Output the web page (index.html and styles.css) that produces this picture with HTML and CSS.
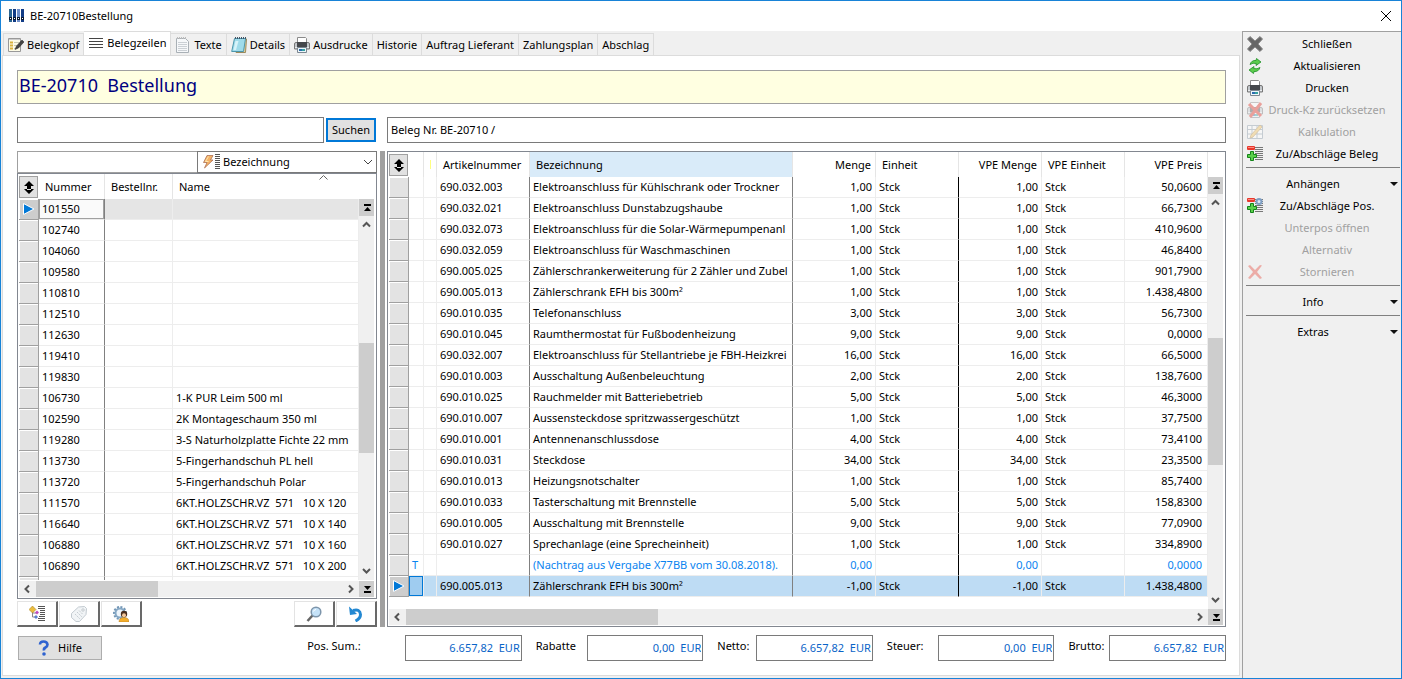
FILE: index.html
```html
<!DOCTYPE html>
<html lang="de">
<head>
    <meta charset="UTF-8">
    <meta name="viewport" content="width=device-width, initial-scale=1.0">
    <title>BE-20710 Bestellung</title>
    <link rel="stylesheet" href="styles.css">
</head>
<body>
    <!-- Shared icons -->
    <svg class="sprite" aria-hidden="true">
        <symbol id="i-printer" viewBox="0 0 16 16">
            <path d="M3.500.5h8l1 1V6h-9z" fill="#fff" stroke="#8a8a8a"/>
            <path d="M.5 7q0-1.500 1.500-1.500h12q1.500 0 1.500 1.500v5H.5z" fill="#c3c7cb" stroke="#777"/>
            <path d="M3 5h10v5H3z" fill="#45484c"/>
            <path d="M1 10.500h14" stroke="#e9ecee"/>
            <path d="M3.500 10.500h9v5h-9z" fill="#eef6fb" stroke="#7b8790"/>
            <path d="M5 12h3v2H5z" fill="#2b6cb0"/><path d="M8 12h3v2H8z" fill="#35a3a0"/>
        </symbol>
        <symbol id="i-sort" viewBox="0 0 16 16">
            <path d="M8 2l5 5H3zM8 15l5-5H3zM6 6h4v5H6z" fill="#000"/>
        </symbol>
        <symbol id="i-plusminus" viewBox="0 0 16 16">
            <path d="M8 1.500h8M8 3.500h8M8 5.500h8M8 7.500h8M10 9.500h6M10 11.500h6M8 13.500h8" stroke="#777"/>
            <rect x="0" y="0" width="8" height="4" rx="1" fill="#e8382c"/><path d="M1 1.500h6" stroke="#ff8b80"/>
            <path d="M3.500 5.500h3v3h3v3h-3v3h-3v-3h-3v-3h3z" fill="#5bd04a" stroke="#14841a"/>
        </symbol>
        <symbol id="i-up" viewBox="0 0 15 17"><path d="M4 10.500l3.500-3.500 3.500 3.500" fill="none" stroke="#555" stroke-width="2"/></symbol>
        <symbol id="i-down" viewBox="0 0 15 17"><path d="M4 6l3.500 3.500L11 6" fill="none" stroke="#555" stroke-width="2"/></symbol>
        <symbol id="i-left" viewBox="0 0 17 16"><path d="M10 4.500L6.500 8l3.500 3.500" fill="none" stroke="#555" stroke-width="2"/></symbol>
        <symbol id="i-right" viewBox="0 0 17 16"><path d="M7 4.500l3.500 3.500L7 11.500" fill="none" stroke="#555" stroke-width="2"/></symbol>
        <symbol id="i-first" viewBox="0 0 15 17"><path d="M5 5h7v2H5zM8.500 8l3.500 4H5z"/></symbol>
        <symbol id="i-last" viewBox="0 0 15 16"><path d="M5 10h7v2H5zM8.500 9L12 5H5z"/></symbol>
        <symbol id="i-row" viewBox="0 0 14 14"><path d="M2.500 1.500v11L13 7z" fill="#0078d7" stroke="#fff"/></symbol>
        <symbol id="i-menu" viewBox="0 0 8 5"><path d="M0 0h8L4 4z" fill="#111"/></symbol>
    </svg>

    <div class="window">
        <header class="titlebar">
            <svg width="16" height="16" viewBox="0 0 16 16" aria-hidden="true">
                <path d="M0 1h3v13H0z" fill="#2a6592"/><path d="M4 1h3v13H4z" fill="#123c86"/><path d="M8 1h3v13H8z" fill="#6f8fc9"/><path d="M12 1h3v13h-3z" fill="#123c86"/>
                <path d="M0 9h3v3H0zM4 9h3v3H4zM8 9h3v3H8zM12 9h3v3h-3z" fill="#0a1a33"/><path d="M1 10h1v1H1zM5 10h1v1H5zM9 10h1v1H9zM13 10h1v1h-1z" fill="#fff"/>
            </svg>
            <h1>BE-20710Bestellung</h1>
            <button class="close" type="button" aria-label="Fenster schließen">
                <svg width="12" height="12" viewBox="0 0 12 12"><path d="M1 1l10 10M11 1L1 11" stroke="#000" fill="none"/></svg>
            </button>
        </header>

        <div class="body">
            <main class="main">
                <nav class="tabs">
                    <button class="tab" type="button">
                        <svg width="16" height="16" viewBox="0 0 16 16"><path d="M.5 1.500h12v13H.5z" fill="#fdfbe6" stroke="#999"/><path d="M1 2h11v1H1z" fill="#ccc"/><path d="M2 5.500h3M2 8.500h3M2 11.500h3" stroke="#d9b23c" stroke-width="2"/><path d="M6 5.500h5M6 8.500h3M6 11.500h2" stroke="#c9c9b0"/><path d="M14 3L8.500 9 7 12.500l3.500-1.500L16 5z" fill="#444" stroke="#222" stroke-width=".5"/></svg>
                        Belegkopf
                    </button>
                    <button class="tab active" type="button">
                        <svg width="16" height="16" viewBox="0 0 16 16"><path d="M1 3.500h14M1 6.500h14M1 9.500h14M1 12.500h14" stroke="#444"/></svg>
                        Belegzeilen
                    </button>
                    <button class="tab" type="button">
                        <svg width="16" height="16" viewBox="0 0 16 16"><path d="M1.500 1.500h9l3 3v11h-12z" fill="#f6f8fa" stroke="#a9b0b6"/><path d="M2 1h10" stroke="#bbb" stroke-dasharray="1 1" stroke-width="2"/><path d="M3 5.500h9M3 7.500h9M3 9.500h9M3 11.500h9M3 13.500h9" stroke="#cbd0d5"/></svg>
                        Texte
                    </button>
                    <button class="tab" type="button">
                        <svg width="16" height="16" viewBox="0 0 16 16"><path d="M4 2h11.500l-1 13.500H5z" fill="#e5cf9a" stroke="#9b8a5c"/><path d="M3.500 1.500h11l-2 13H.7z" fill="#9fdbea" stroke="#4c96ac"/><path d="M4 1h11" stroke="#456" stroke-dasharray="1 1" stroke-width="2"/><path d="M4.500 4h3L5 13H2.500z" fill="#d6f3f9"/></svg>
                        Details
                    </button>
                    <button class="tab" type="button"><svg width="16" height="16"><use href="#i-printer"/></svg>Ausdrucke</button>
                    <button class="tab" type="button">Historie</button>
                    <button class="tab" type="button">Auftrag Lieferant</button>
                    <button class="tab" type="button">Zahlungsplan</button>
                    <button class="tab" type="button">Abschlag</button>
                </nav>

                <div class="panel">
                    <h2 class="banner">BE-20710  Bestellung</h2>

                    <div class="search-row">
                        <form class="search">
                            <input type="text" class="field" aria-label="Suchbegriff">
                            <button type="button" class="btn-search">Suchen</button>
                        </form>
                        <input type="text" class="field" aria-label="Beleg" value="Beleg Nr. BE-20710 /">
                    </div>

                    <div class="split">
                        <!-- Article list -->
                        <section class="left-pane">
                            <div class="filter">
                                <input type="text" class="filter-text" aria-label="Filter">
                                <div class="combo">
                                    <svg width="18" height="16" viewBox="0 0 18 16"><path d="M5 1.500h6L8.500 6H11L2.500 14 5 8.500H1.500z" fill="#f4b267" stroke="#a5664a" stroke-width=".7"/><path d="M6.500 2.500L3.500 7.500h3" fill="none" stroke="#ffe7ae"/><path d="M13 .500h5M13 2.500h5M13 4.500h5M13 6.500h5M13 8.500h5M13 10.500h5M13 12.500h5M13 14.500h5" stroke="#555"/></svg>
                                    <select aria-label="Sortierung"><option>Bezeichnung</option><option>Nummer</option></select>
                                    <svg width="10" height="6" viewBox="0 0 10 6"><path d="M1 1l4 4 4-4" fill="none" stroke="#444"/></svg>
                                </div>
                            </div>

                            <div class="grid grid-articles">
                                <table>
                                    <colgroup><col class="w-ind"><col class="w-nr"><col class="w-best"><col></colgroup>
                                    <thead>
                                        <tr>
                                            <th class="corner"><button type="button" aria-label="Spalten"><svg width="16" height="16"><use href="#i-sort"/></svg></button></th>
                                            <th>Nummer</th><th>Bestellnr.</th>
                                            <th class="sorted">Name<svg width="9" height="5" viewBox="0 0 9 5"><path d="M.5 4.500l4-4 4 4" fill="none" stroke="#666"/></svg></th>
                                        </tr>
                                    </thead>
                                    <tbody>
                                        <tr class="current"><td class="ind"><svg width="14" height="14"><use href="#i-row"/></svg></td><td class="dark focus">101550</td><td></td><td></td></tr>
                                        <tr><td class="ind"></td><td class="dark">102740</td><td></td><td></td></tr>
                                        <tr><td class="ind"></td><td class="dark">104060</td><td></td><td></td></tr>
                                        <tr><td class="ind"></td><td class="dark">109580</td><td></td><td></td></tr>
                                        <tr><td class="ind"></td><td class="dark">110810</td><td></td><td></td></tr>
                                        <tr><td class="ind"></td><td class="dark">112510</td><td></td><td></td></tr>
                                        <tr><td class="ind"></td><td class="dark">112630</td><td></td><td></td></tr>
                                        <tr><td class="ind"></td><td class="dark">119410</td><td></td><td></td></tr>
                                        <tr><td class="ind"></td><td class="dark">119830</td><td></td><td></td></tr>
                                        <tr><td class="ind"></td><td class="dark">106730</td><td></td><td>1-K PUR Leim 500 ml</td></tr>
                                        <tr><td class="ind"></td><td class="dark">102590</td><td></td><td>2K Montageschaum 350 ml</td></tr>
                                        <tr><td class="ind"></td><td class="dark">119280</td><td></td><td>3-S Naturholzplatte Fichte 22 mm</td></tr>
                                        <tr><td class="ind"></td><td class="dark">113730</td><td></td><td>5-Fingerhandschuh PL hell</td></tr>
                                        <tr><td class="ind"></td><td class="dark">113720</td><td></td><td>5-Fingerhandschuh Polar</td></tr>
                                        <tr><td class="ind"></td><td class="dark">111570</td><td></td><td>6KT.HOLZSCHR.VZ  571   10 X 120</td></tr>
                                        <tr><td class="ind"></td><td class="dark">116640</td><td></td><td>6KT.HOLZSCHR.VZ  571   10 X 140</td></tr>
                                        <tr><td class="ind"></td><td class="dark">106880</td><td></td><td>6KT.HOLZSCHR.VZ  571   10 X 160</td></tr>
                                        <tr><td class="ind"></td><td class="dark">106890</td><td></td><td>6KT.HOLZSCHR.VZ  571   10 X 200</td></tr>
                                        <tr class="cut"><td class="ind"></td><td class="dark"></td><td></td><td></td></tr>
                                    </tbody>
                                </table>
                                <div class="vscroll">
                                    <button type="button" class="jump" aria-label="Anfang"><svg width="15" height="17"><use href="#i-first"/></svg></button>
                                    <button type="button" aria-label="Hoch"><svg width="15" height="17"><use href="#i-up"/></svg></button>
                                    <div class="track"><div class="thumb"></div></div>
                                    <button type="button" aria-label="Runter"><svg width="15" height="17"><use href="#i-down"/></svg></button>
                                </div>
                                <div class="hscroll">
                                    <button type="button" aria-label="Links"><svg width="17" height="16"><use href="#i-left"/></svg></button>
                                    <div class="track"><div class="thumb"></div></div>
                                    <button type="button" aria-label="Rechts"><svg width="17" height="16"><use href="#i-right"/></svg></button>
                                </div>
                                <button type="button" class="jump" aria-label="Ende"><svg width="15" height="16"><use href="#i-last"/></svg></button>
                            </div>

                            <div class="tools">
                                <button type="button" aria-label="Struktur">
                                    <svg width="16" height="16" viewBox="0 0 16 16"><path d="M3.500 5v6H7M3.500 7h4" fill="none" stroke="#888"/><path d="M3.500 0L7 3.500 3.500 7 0 3.500z" fill="#ebbd3e" stroke="#a07a1d" stroke-width=".5"/><path d="M8 4.500L10 6.500 8 8.500 6 6.500z" fill="#c04cc0"/><path d="M7 9L9 11 7 13 5 11z" fill="#5a7fd0"/><path d="M9 .500h7M9 2.500h7M11 4.500h5M11 6.500h5M11 8.500h5M10 10.500h6M9 12.500h7M9 14.500h7" stroke="#555"/></svg>
                                </button>
                                <button type="button" aria-label="Etikett">
                                    <svg width="16" height="16" viewBox="0 0 16 16"><path d="M.5 7.500L7.500 1l6-.5 2 2-.5 6-6.500 7H5L.5 11.500z" fill="#f1f4f6" stroke="#c2cad0"/><circle cx="12" cy="4" r="1.200" fill="#fff" stroke="#c0c7cc"/><path d="M4 8l5 5M6 6l5 5M8 4.500l4 4" stroke="#c5ccd1" stroke-dasharray="2 1"/></svg>
                                </button>
                                <button type="button" aria-label="Einstellungen">
                                    <svg width="16" height="16" viewBox="0 0 16 16"><circle cx="7" cy="7" r="6" fill="none" stroke="#7296b5" stroke-width="2" stroke-dasharray="2 1.500"/><circle cx="7" cy="7" r="4.500" fill="#eef5fb" stroke="#86a8c5" stroke-width="2"/><circle cx="11" cy="8" r="3.200" fill="#4a2d1d"/><circle cx="11" cy="9.200" r="2" fill="#f3c79b"/><path d="M6 16q0-4.500 5-4.500t5 4.500z" fill="#f3ae2c" stroke="#b5761a" stroke-width=".5"/></svg>
                                </button>
                                <span class="spacer"></span>
                                <button type="button" aria-label="Lupe">
                                    <svg width="16" height="16" viewBox="0 0 16 16"><path d="M6.500 9.500L1.500 15" stroke="#666" stroke-width="2.500"/><circle cx="10" cy="6" r="4.800" fill="#c5e2f8" stroke="#7d95ab" stroke-width="1.500"/><path d="M7.500 5.500q.5-2 2.500-2" fill="none" stroke="#fff"/></svg>
                                </button>
                                <button type="button" aria-label="Zurück">
                                    <svg width="16" height="16" viewBox="0 0 16 16"><path d="M5 4.500q7-2 7.500 4 0 4-5 6.500" fill="none" stroke="#2388d2" stroke-width="3"/><path d="M1 .500L2 9l7-1z" fill="#2388d2"/></svg>
                                </button>
                            </div>
                        </section>

                        <div class="splitter"></div>

                        <!-- Document lines -->
                        <section class="grid grid-lines">
                            <table>
                                <colgroup><col class="w-ind"><col class="w-type"><col class="w-flag"><col class="w-art"><col><col class="w-num"><col class="w-num"><col class="w-num"><col class="w-num"><col class="w-num"></colgroup>
                                <thead>
                                    <tr>
                                        <th class="corner"><button type="button" aria-label="Spalten"><svg width="16" height="16"><use href="#i-sort"/></svg></button></th>
                                        <th></th><th class="flag"><span></span></th><th>Artikelnummer</th><th class="hot">Bezeichnung</th><th class="num">Menge</th><th>Einheit</th><th class="num">VPE Menge</th><th>VPE Einheit</th><th class="num">VPE Preis</th>
                                    </tr>
                                </thead>
                                <tbody>
                                    <tr><td class="ind"></td><td></td><td></td><td class="dark">690.032.003</td><td class="dark">Elektroanschluss für Kühlschrank oder Trockner</td><td class="num">1,00</td><td class="black">Stck</td><td class="num">1,00</td><td>Stck</td><td class="num">50,0600</td></tr>
                                    <tr><td class="ind"></td><td></td><td></td><td class="dark">690.032.021</td><td class="dark">Elektroanschluss Dunstabzugshaube</td><td class="num">1,00</td><td class="black">Stck</td><td class="num">1,00</td><td>Stck</td><td class="num">66,7300</td></tr>
                                    <tr><td class="ind"></td><td></td><td></td><td class="dark">690.032.073</td><td class="dark">Elektroanschluss für die Solar-Wärmepumpenanl</td><td class="num">1,00</td><td class="black">Stck</td><td class="num">1,00</td><td>Stck</td><td class="num">410,9600</td></tr>
                                    <tr><td class="ind"></td><td></td><td></td><td class="dark">690.032.059</td><td class="dark">Elektroanschluss für Waschmaschinen</td><td class="num">1,00</td><td class="black">Stck</td><td class="num">1,00</td><td>Stck</td><td class="num">46,8400</td></tr>
                                    <tr><td class="ind"></td><td></td><td></td><td class="dark">690.005.025</td><td class="dark">Zählerschrankerweiterung für 2 Zähler und Zubel</td><td class="num">1,00</td><td class="black">Stck</td><td class="num">1,00</td><td>Stck</td><td class="num">901,7900</td></tr>
                                    <tr><td class="ind"></td><td></td><td></td><td class="dark">690.005.013</td><td class="dark">Zählerschrank EFH bis 300m²</td><td class="num">1,00</td><td class="black">Stck</td><td class="num">1,00</td><td>Stck</td><td class="num">1.438,4800</td></tr>
                                    <tr><td class="ind"></td><td></td><td></td><td class="dark">690.010.035</td><td class="dark">Telefonanschluss</td><td class="num">3,00</td><td class="black">Stck</td><td class="num">3,00</td><td>Stck</td><td class="num">56,7300</td></tr>
                                    <tr><td class="ind"></td><td></td><td></td><td class="dark">690.010.045</td><td class="dark">Raumthermostat für Fußbodenheizung</td><td class="num">9,00</td><td class="black">Stck</td><td class="num">9,00</td><td>Stck</td><td class="num">0,0000</td></tr>
                                    <tr><td class="ind"></td><td></td><td></td><td class="dark">690.032.007</td><td class="dark">Elektroanschluss für Stellantriebe je FBH-Heizkrei</td><td class="num">16,00</td><td class="black">Stck</td><td class="num">16,00</td><td>Stck</td><td class="num">66,5000</td></tr>
                                    <tr><td class="ind"></td><td></td><td></td><td class="dark">690.010.003</td><td class="dark">Ausschaltung Außenbeleuchtung</td><td class="num">2,00</td><td class="black">Stck</td><td class="num">2,00</td><td>Stck</td><td class="num">138,7600</td></tr>
                                    <tr><td class="ind"></td><td></td><td></td><td class="dark">690.010.025</td><td class="dark">Rauchmelder mit Batteriebetrieb</td><td class="num">5,00</td><td class="black">Stck</td><td class="num">5,00</td><td>Stck</td><td class="num">46,3000</td></tr>
                                    <tr><td class="ind"></td><td></td><td></td><td class="dark">690.010.007</td><td class="dark">Aussensteckdose spritzwassergeschützt</td><td class="num">1,00</td><td class="black">Stck</td><td class="num">1,00</td><td>Stck</td><td class="num">37,7500</td></tr>
                                    <tr><td class="ind"></td><td></td><td></td><td class="dark">690.010.001</td><td class="dark">Antennenanschlussdose</td><td class="num">4,00</td><td class="black">Stck</td><td class="num">4,00</td><td>Stck</td><td class="num">73,4100</td></tr>
                                    <tr><td class="ind"></td><td></td><td></td><td class="dark">690.010.031</td><td class="dark">Steckdose</td><td class="num">34,00</td><td class="black">Stck</td><td class="num">34,00</td><td>Stck</td><td class="num">23,3500</td></tr>
                                    <tr><td class="ind"></td><td></td><td></td><td class="dark">690.010.013</td><td class="dark">Heizungsnotschalter</td><td class="num">1,00</td><td class="black">Stck</td><td class="num">1,00</td><td>Stck</td><td class="num">85,7400</td></tr>
                                    <tr><td class="ind"></td><td></td><td></td><td class="dark">690.010.033</td><td class="dark">Tasterschaltung mit Brennstelle</td><td class="num">5,00</td><td class="black">Stck</td><td class="num">5,00</td><td>Stck</td><td class="num">158,8300</td></tr>
                                    <tr><td class="ind"></td><td></td><td></td><td class="dark">690.010.005</td><td class="dark">Ausschaltung mit Brennstelle</td><td class="num">9,00</td><td class="black">Stck</td><td class="num">9,00</td><td>Stck</td><td class="num">77,0900</td></tr>
                                    <tr><td class="ind"></td><td></td><td></td><td class="dark">690.010.027</td><td class="dark">Sprechanlage (eine Sprecheinheit)</td><td class="num">1,00</td><td class="black">Stck</td><td class="num">1,00</td><td>Stck</td><td class="num">334,8900</td></tr>
                                    <tr class="text-line"><td class="ind"></td><td>T</td><td></td><td class="dark"></td><td class="dark">(Nachtrag aus Vergabe X77BB vom 30.08.2018).</td><td class="num">0,00</td><td class="black"></td><td class="num">0,00</td><td></td><td class="num">0,0000</td></tr>
                                    <tr class="selected"><td class="ind"><svg width="14" height="14"><use href="#i-row"/></svg></td><td class="focus"></td><td></td><td class="dark">690.005.013</td><td class="dark">Zählerschrank EFH bis 300m²</td><td class="num">-1,00</td><td class="black">Stck</td><td class="num">-1,00</td><td>Stck</td><td class="num">1.438,4800</td></tr>
                                </tbody>
                            </table>
                            <div class="vscroll">
                                <button type="button" class="jump" aria-label="Anfang"><svg width="15" height="17"><use href="#i-first"/></svg></button>
                                <button type="button" aria-label="Hoch"><svg width="15" height="17"><use href="#i-up"/></svg></button>
                                <div class="track"><div class="thumb"></div></div>
                                <button type="button" aria-label="Runter"><svg width="15" height="17"><use href="#i-down"/></svg></button>
                            </div>
                            <div class="hscroll">
                                <button type="button" aria-label="Links"><svg width="17" height="16"><use href="#i-left"/></svg></button>
                                <div class="track"><div class="thumb"></div></div>
                                <button type="button" aria-label="Rechts"><svg width="17" height="16"><use href="#i-right"/></svg></button>
                            </div>
                            <button type="button" class="jump" aria-label="Ende"><svg width="15" height="16"><use href="#i-last"/></svg></button>
                        </section>
                    </div>

                    <footer class="footer">
                        <button type="button" class="btn-help">
                            <svg width="12" height="16" viewBox="0 0 12 16"><path d="M2 4.500Q2 1.500 5.500 1.500T9.500 4.500Q9.500 6.500 7.500 7.500T6 10.500" fill="none" stroke="#2f63d0" stroke-width="2.600"/><circle cx="6" cy="14" r="1.800" fill="#2f63d0"/></svg>
                            Hilfe
                        </button>
                        <div class="totals">
                            <label for="sum-pos">Pos. Sum.:</label><input id="sum-pos" class="field" value="6.657,82  EUR" readonly>
                            <label for="sum-rab">Rabatte</label><input id="sum-rab" class="field" value="0,00  EUR" readonly>
                            <label for="sum-net">Netto:</label><input id="sum-net" class="field" value="6.657,82  EUR" readonly>
                            <label for="sum-tax">Steuer:</label><input id="sum-tax" class="field" value="0,00  EUR" readonly>
                            <label for="sum-bru">Brutto:</label><input id="sum-bru" class="field" value="6.657,82  EUR" readonly>
                        </div>
                    </footer>
                </div>
            </main>

            <aside class="sidebar">
                <div class="group">
                    <button type="button"><svg width="16" height="16" viewBox="0 0 16 16"><path d="M3 .500L8 5 13 .500 15.500 3 11 8l4.500 5-2.500 2.500L8 11 3 15.500.5 13 5 8 .5 3z" fill="#666" stroke="#888" stroke-linejoin="round"/></svg><span>Schließen</span></button>
                    <button type="button"><svg width="16" height="16" viewBox="0 0 16 16"><path d="M3 6.500Q4.500 2 9 2.500L9.500.5 14 4 9 7.500 9.300 5.500Q6 4.500 3 6.500z" fill="#5ccc4c" stroke="#1d8f26" stroke-width=".8"/><path d="M13 9.500Q11.500 14 7 13.500L6.500 15.500 2 12l5-3.500-.3 2Q10 11.500 13 9.500z" fill="#5ccc4c" stroke="#1d8f26" stroke-width=".8"/></svg><span>Aktualisieren</span></button>
                    <button type="button"><svg width="16" height="16"><use href="#i-printer"/></svg><span>Drucken</span></button>
                    <button type="button" disabled><svg width="16" height="16" viewBox="0 0 16 16"><use href="#i-printer"/><path d="M2 2l12 12M14 1L3 15" stroke="#e02b1d" stroke-width="3"/></svg><span>Druck-Kz zurücksetzen</span></button>
                    <button type="button" disabled><svg width="16" height="16" viewBox="0 0 16 16"><path d="M.5 1.500h15v13H.5zM.5 5.500h15M.5 10h15M5 1.500v13M10 1.500v13" fill="#fff" stroke="#8798a6"/><path d="M13 1l2 2L6 13l-3 1 1-3z" fill="#f2c25a" stroke="#a8782d" stroke-width=".7"/></svg><span>Kalkulation</span></button>
                    <button type="button"><svg width="16" height="16"><use href="#i-plusminus"/></svg><span>Zu/Abschläge Beleg</span></button>
                </div>
                <div class="group">
                    <button type="button" class="menu"><span>Anhängen</span><svg width="8" height="5"><use href="#i-menu"/></svg></button>
                    <button type="button"><svg width="16" height="16" viewBox="0 0 16 16"><use href="#i-plusminus"/><circle cx="12" cy="3.500" r="2.500" fill="#dce8f5" stroke="#7f9fc4" stroke-width="2"/></svg><span>Zu/Abschläge Pos.</span></button>
                    <button type="button" disabled><span>Unterpos öffnen</span></button>
                    <button type="button" disabled><span>Alternativ</span></button>
                    <button type="button" disabled><svg width="16" height="16" viewBox="0 0 16 16"><path d="M1 2l2-1 5 5 5-5 2 .5L10 8l5 6-2 1-5-5-5 5-2-1 5-6z" fill="#e8493b"/></svg><span>Stornieren</span></button>
                </div>
                <div class="group">
                    <button type="button" class="menu"><span>Info</span><svg width="8" height="5"><use href="#i-menu"/></svg></button>
                </div>
                <div class="group">
                    <button type="button" class="menu"><span>Extras</span><svg width="8" height="5"><use href="#i-menu"/></svg></button>
                </div>
            </aside>
        </div>
    </div>
</body>
</html>
```
FILE: styles.css
```css
* {
    margin: 0;
    padding: 0;
    box-sizing: border-box;
}

body {
    font-family: 'Noto Sans', 'Open Sans', sans-serif;
    font-size: 11px;
    line-height: 16px;
    background: #fff;
    color: #000;
}

button,
input,
select {
    font: inherit;
    color: inherit;
    border: none;
    background: none;
}

svg {
    display: block;
    flex: none;
}

.sprite {
    position: absolute;
    width: 0;
    height: 0;
}

.window {
    display: flex;
    flex-direction: column;
    min-height: 100vh;
    border: 1px solid #1883d7;
}

.titlebar {
    display: flex;
    align-items: center;
    gap: 5px;
    height: 30px;
    padding: 0 9px 0 8px;
}

.titlebar h1 {
    flex: 1;
    font-size: 11px;
    font-weight: 400;
}

.body {
    display: flex;
    flex: 1;
}

.main {
    display: flex;
    flex-direction: column;
    flex: 1;
    min-width: 0;
    padding: 0 2px 2px 1px;
    background: #f0f0f0;
}

/* Tabs */
.tabs {
    display: flex;
    align-items: flex-end;
    height: 24px;
    padding-left: 1px;
}

.tab {
    display: flex;
    align-items: center;
    gap: 3px;
    height: 22px;
    padding: 0 4px;
    border: 1px solid #dcdcdc;
    border-width: 1px 1px 0 0;
    white-space: nowrap;
}

.tab:first-child {
    border-left-width: 1px;
}

.tab.active {
    height: 25px;
    margin-bottom: -1px;
    padding-bottom: 2px;
    background: #fff;
}

.panel {
    flex: 1;
    padding: 14px 13px 0 14px;
    border: 1px solid #dcdcdc;
    background: #fff;
}

.banner {
    height: 34px;
    padding: 1px;
    border: 1px solid #a0a0a0;
    background: #ffffe1;
    color: #000080;
    font-size: 18px;
    font-weight: 400;
    line-height: 26px;
    white-space: pre;
}

.field {
    min-width: 0;
    height: 26px;
    padding: 0 3px 2px;
    border: 1px solid #7a7a7a;
    background: #fff;
}

.search-row {
    display: grid;
    grid-template-columns: 359px 1fr;
    gap: 11px;
    margin: 13px 0 8px;
}

.search {
    display: flex;
    align-items: center;
    gap: 2px;
}

.search .field {
    flex: 1;
}

.btn-search {
    width: 50px;
    height: 24px;
    border: 2px solid #0078d7;
    background: #e1e1e1;
}

.split {
    display: grid;
    grid-template-columns: 360px 10px 1fr;
}

.splitter {
    margin: 0 2px 0 3px;
    background: #a0a0a0;
}

.left-pane {
    display: flex;
    flex-direction: column;
    min-width: 0;
}

.filter {
    display: grid;
    grid-template-columns: 1fr 1fr;
    height: 22px;
}

.filter-text {
    min-width: 0;
    padding: 0 3px;
    border: 1px solid #a0a0a0;
    border-right: none;
}

.combo {
    display: flex;
    align-items: center;
    gap: 3px;
    padding: 0 3px 0 4px;
    border: 1px solid #7a7a7a;
}

.combo select {
    flex: 1;
    appearance: none;
}

/* Data grids */
.grid {
    display: grid;
    grid-template-columns: 1fr 16px;
    grid-template-rows: 1fr auto;
    min-width: 0;
    padding: 0 1px 1px;
    border: 1px solid #828790;
}

.grid-articles {
    flex: 1;
    row-gap: 1px;
}

.grid-lines {
    row-gap: 12px;
}

.grid table {
    width: 100%;
    align-self: start;
    table-layout: fixed;
    border-collapse: separate;
    border-spacing: 0;
}

.w-ind { width: 20px; }
.w-nr { width: 66px; }
.w-best { width: 68px; }
.w-type { width: 15px; }
.w-flag { width: 13px; }
.w-art { width: 93px; }
.w-num { width: 83px; }

.grid th {
    height: 25px;
    padding: 0 6px;
    border-right: 1px solid #e5e5e5;
    font-weight: 400;
    text-align: left;
    white-space: nowrap;
}

.grid td {
    height: 21px;
    padding: 0 3px;
    border-right: 1px solid #ededed;
    border-bottom: 1px solid #ededed;
    line-height: 20px;
    white-space: pre;
    overflow: hidden;
}

.grid th.num,
.grid td.num {
    text-align: right;
}

.grid th.num {
    padding-right: 4px;
}

.grid th.num:last-child,
.grid td.num:last-child {
    padding-right: 5px;
}

.grid th.hot {
    background: #d9ebf9;
}

.grid th.corner {
    padding: 1px 0;
    border: none;
}

.corner button {
    display: flex;
    align-items: center;
    justify-content: center;
    width: 19px;
    height: 22px;
    border: 1px solid #a0a0a0;
    background: #e1e1e1;
}

.grid th.flag {
    padding: 0 5px 0 6px;
}

.flag span {
    display: block;
    width: 1px;
    height: 9px;
    background: #ffff80;
}

.grid th.sorted {
    position: relative;
    border-right: none;
}

.sorted svg {
    position: absolute;
    top: 1px;
    right: 31px;
}

.grid td.dark {
    border-right-color: #808080;
}

.grid td.black {
    border-right-color: #000;
}

.grid td.ind {
    padding: 0 2px;
    border-right-color: #a0a0a0;
    border-bottom-color: #a0a0a0;
    background: #e3e3e3;
    box-shadow: inset 1px 1px #fff;
}

.current td {
    background: #e5e5e5;
}

.grid .current .ind,
.grid .selected .ind {
    background: #cdcdcd;
}

.grid .current .focus {
    background: #fafafa;
    box-shadow: inset 0 0 0 1px #a0a0a0;
}

.text-line td {
    color: #0a84f0;
}

.selected td {
    background: #bedcf4;
}

.grid .selected .focus {
    background: #9fccf0;
    box-shadow: inset 0 0 0 1px #0078d7;
}

.grid .cut td {
    height: 3px;
    border-bottom: none;
    line-height: 0;
}

/* Scrollbars */
.vscroll {
    display: flex;
    flex-direction: column;
    margin: 25px 1px 0 0;
    background: #f0f0f0;
}

.grid-lines .vscroll {
    margin-bottom: -12px;
}

.hscroll {
    display: flex;
    height: 16px;
    background: #f0f0f0;
}

.track {
    display: grid;
    flex: 1;
}

.thumb {
    background: #cdcdcd;
}

.vscroll .track {
    grid-template-rows: 1fr 1fr 1fr;
}

.vscroll .thumb {
    grid-row: 2;
}

.hscroll .track {
    grid-template-columns: 2fr 3fr;
}

.grid-lines .hscroll .track {
    grid-template-columns: 9fr 19fr;
}

.jump {
    width: 15px;
    height: 17px;
    background: #cdcdcd;
}

.grid > .jump {
    height: 16px;
}

/* Button bar below the article list */
.tools {
    display: flex;
    gap: 1px;
    margin-top: 2px;
}

.tools button {
    display: flex;
    align-items: center;
    justify-content: center;
    width: 41px;
    height: 26px;
    border: 1px solid #e3e3e3;
    border-right: 2px solid #696969;
    border-bottom: 2px solid #696969;
}

.spacer {
    flex: 1;
}

.footer {
    display: flex;
    align-items: center;
    justify-content: space-between;
    margin-top: 8px;
}

.btn-help {
    display: flex;
    align-items: center;
    justify-content: center;
    gap: 8px;
    width: 84px;
    height: 24px;
    margin-left: 1px;
    border: 1px solid #adadad;
    background: #e1e1e1;
}

.totals {
    display: grid;
    grid-template-columns: 98px 1fr 65px 1fr 53px 1fr 65px 1fr 55px 1fr;
    width: 76%;
}

.totals label {
    padding: 3px 0 0 14px;
}

.totals label:first-child {
    padding-left: 0;
}

.totals .field {
    padding: 0 1px 2px;
    color: #0a64c8;
    text-align: right;
}

/* Actions */
.sidebar {
    width: 159px;
    padding: 1px 1px 0 3px;
    border-top: 1px solid #a0a0a0;
    border-left: 1px solid #a0a0a0;
    background: #f0f0f0;
}

.group + .group {
    margin-top: 2px;
    padding-top: 5px;
    border-top: 1px solid #808080;
}

.sidebar button {
    display: grid;
    grid-template-columns: 16px 1fr;
    align-items: center;
    width: 100%;
    height: 22px;
    padding: 0 9px 0 1px;
    white-space: nowrap;
}

.sidebar button span {
    grid-column: 2;
}

.sidebar button:disabled {
    color: #a0a0a0;
}

.sidebar button:disabled svg {
    opacity: 0.4;
}

.sidebar .menu {
    grid-template-columns: 1fr 8px;
    padding: 0 2px 0 0;
}

.sidebar .menu span {
    grid-column: 1;
    padding-right: 10px;
}
```
